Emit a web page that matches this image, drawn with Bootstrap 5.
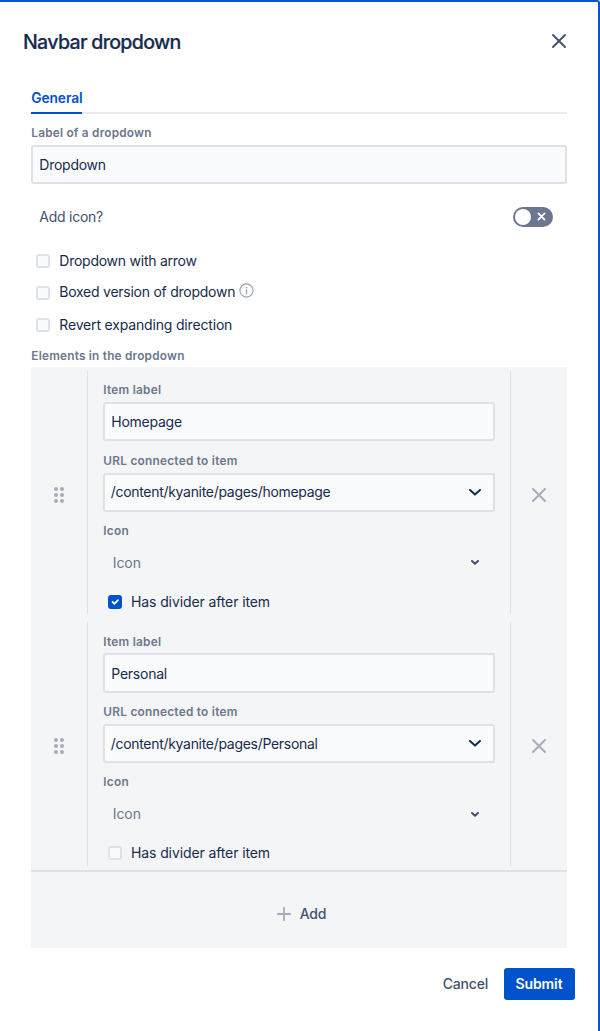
<!DOCTYPE html>
<html lang="en">
<head>
<meta charset="utf-8">
<meta name="viewport" content="width=device-width, initial-scale=1">
<title>Navbar dropdown</title>
<link href="https://cdn.jsdelivr.net/npm/bootstrap@5.3.0/dist/css/bootstrap.min.css" rel="stylesheet">
<style>
body{font-family:Inter,"Liberation Sans",sans-serif;font-size:14px;line-height:20px;color:#172b4d;background:#fff}
.dialog{height:1031px;border-top:2px solid #0059cf;border-right:2px solid #0059cf;border-top-right-radius:3px;overflow:hidden;padding:0 31.5px 0 31.3px}
.dialog-head{height:79px;margin:0 1px 1px -8.3px}
.dialog-title{font-size:19.6px;line-height:24px;font-weight:500;letter-spacing:-.7px;margin:0;-webkit-text-stroke:.2px}
.plain-btn{border:0;background:none;padding:0;display:flex;color:#42526e}
.dialog-head .plain-btn{margin-top:-1px}
.tabs{height:32px;border-bottom:2px solid #ebecf0}
.tabs .nav-link{padding:6px 0 0;height:32px;line-height:20px;font-weight:600;font-size:13.8px;letter-spacing:-.12px;color:#0052cc;border-bottom:2px solid #0052cc}
.field-label{display:block;font-size:11.8px;line-height:16px;font-weight:600;letter-spacing:.22px;color:#6b778c;margin:11.2px 0 3.9px}
.item-body .field-label{letter-spacing:.27px}
.field{height:39.4px;border:2px solid #dfe1e6;border-radius:3px;background:#fafbfc;padding:0 6px;font-size:14px;line-height:20px;letter-spacing:-.25px;color:#172b4d}
.field:focus{box-shadow:none}
.select-field{letter-spacing:-.3px;padding-left:5.4px}
.quiet{border-color:transparent;background:none;color:#6b778c;padding-left:7.5px;letter-spacing:-.1px}
.add-icon{letter-spacing:-.25px;color:#42526e}
.toggle{width:40px;height:20px;border-radius:10px;background:#6b778c;padding:2px 6.5px 2px 2px}
.knob{width:16px;height:16px;border-radius:50%;background:#fff}
.check-row{height:20px;padding-left:5px;gap:9px;letter-spacing:-.25px}
.item-body .check-row{letter-spacing:-.11px;margin-top:9.6px;gap:8.7px}
.check-row .form-check-input{width:14px;height:14px;margin:0;border:2px solid #dfe1e6;border-radius:3px;background-color:#fafbfc;flex:none}
.check-row .form-check-input:checked{background-color:#0052cc;border-color:#0052cc;background-size:12px}
.panel{background:#f4f5f7;margin-top:3px}
.item{padding:4px 0;height:251.4px}
.side{width:56px;padding-top:4.4px}
.item-body{border-left:1px solid #dfe1e6;border-right:1px solid #dfe1e6;padding:0 15px}
.add-row{height:78.3px;border-top:2px solid #dfe1e6;color:#42526e;font-weight:500;gap:9px;padding:8px 0 0 5px;letter-spacing:-.2px}
.foot{height:72px;margin-right:-8px}
.foot .cancel{font-weight:500;color:#42526e;padding:0;margin-right:15.5px;border:0;font-size:14px;line-height:20px;letter-spacing:-.2px}
.foot .submit{width:71px;height:32px;padding:0 0 1px;border:0;border-radius:3px;background:#0052cc;color:#fff;font-size:14px;font-weight:600;letter-spacing:-.1px}
</style>
</head>
<body>
<svg class="d-none">
  <symbol id="cross" viewBox="0 0 14 14"><path d="M1 1L13 13M13 1L1 13" fill="none" stroke="currentColor" stroke-width="1.9" stroke-linecap="round"/></symbol>
  <symbol id="chev" viewBox="0 0 12 7"><path d="M1 1L6 5.6L11 1" fill="none" stroke="currentColor" stroke-width="2" stroke-linecap="round" stroke-linejoin="round"/></symbol>
  <symbol id="chev-small" viewBox="0 0 8 5"><path d="M1 1L4 3.7L7 1" fill="none" stroke="currentColor" stroke-width="2" stroke-linecap="round" stroke-linejoin="round"/></symbol>
  <symbol id="grip" viewBox="0 0 10 16"><g fill="#a5adba"><circle cx="2" cy="2" r="2"/><circle cx="8" cy="2" r="2"/><circle cx="2" cy="8" r="2"/><circle cx="8" cy="8" r="2"/><circle cx="2" cy="14" r="2"/><circle cx="8" cy="14" r="2"/></g></symbol>
</svg>
<main class="dialog">
  <header class="dialog-head d-flex align-items-center justify-content-between">
    <h1 class="dialog-title">Navbar dropdown</h1>
    <button class="plain-btn" aria-label="Close"><svg width="14" height="14"><use href="#cross"/></svg></button>
  </header>
  <nav class="nav tabs"><a class="nav-link" href="#">General</a></nav>
  <label class="field-label" for="lbl">Label of a dropdown</label>
  <input class="form-control field" id="lbl" value="Dropdown">
  <div class="d-flex align-items-center justify-content-between" style="height:64px;padding:1px 14px 0 8px">
    <span class="add-icon">Add icon?</span>
    <div class="toggle d-flex align-items-center justify-content-between">
      <span class="knob"></span>
      <svg width="9" height="9" viewBox="0 0 9 9"><path d="M1.4 1.4L7.6 7.6M7.6 1.4L1.4 7.6" stroke="#fff" stroke-width="1.8" stroke-linecap="round"/></svg>
    </div>
  </div>
  <div class="d-flex flex-column" style="gap:12px;padding-top:2.3px">
    <label class="check-row d-flex align-items-center"><input type="checkbox" class="form-check-input"><span>Dropdown with arrow</span></label>
    <label class="check-row d-flex align-items-center"><input type="checkbox" class="form-check-input"><span class="pb-1" style="line-height:18px;padding-top:2px">Boxed version of dropdown</span>
      <svg width="15" height="15" viewBox="0 0 15 15" style="margin:-5px 0 0 -5.3px"><circle cx="7.5" cy="7.5" r="6.6" fill="none" stroke="#97a0af" stroke-width="1.1"/><circle cx="7.5" cy="4.6" r=".85" fill="#97a0af"/><path d="M7.5 6.9V10.8" stroke="#97a0af" stroke-width="1.3" stroke-linecap="round"/></svg></label>
    <label class="check-row d-flex align-items-center" style="letter-spacing:-.17px"><input type="checkbox" class="form-check-input"><span>Revert expanding direction</span></label>
  </div>
  <div class="field-label" style="margin:13.2px 0 2.8px">Elements in the dropdown</div>
  <section class="panel">
    <div class="item d-flex">
      <div class="side d-flex align-items-center justify-content-center"><svg width="10" height="16"><use href="#grip"/></svg></div>
      <div class="item-body flex-grow-1">
        <label class="field-label" for="i1">Item label</label>
        <input class="form-control field" id="i1" value="Homepage">
        <span class="field-label">URL connected to item</span>
        <div class="field select-field d-flex align-items-center justify-content-between"><span>/content/kyanite/pages/homepage</span><svg width="12" height="7" style="margin-right:5.5px"><use href="#chev"/></svg></div>
        <span class="field-label">Icon</span>
        <div class="field quiet d-flex align-items-center justify-content-between"><span>Icon</span><svg width="8" height="5" style="margin-right:7.5px;color:#42526e"><use href="#chev-small"/></svg></div>
        <label class="check-row d-flex align-items-center"><input type="checkbox" class="form-check-input" checked><span>Has divider after item</span></label>
      </div>
      <div class="side d-flex align-items-center justify-content-center"><button class="plain-btn" style="color:#a5adba" aria-label="Remove"><svg width="14" height="14"><use href="#cross"/></svg></button></div>
    </div>
    <div class="item d-flex">
      <div class="side d-flex align-items-center justify-content-center"><svg width="10" height="16"><use href="#grip"/></svg></div>
      <div class="item-body flex-grow-1">
        <label class="field-label" for="i2">Item label</label>
        <input class="form-control field" id="i2" value="Personal">
        <span class="field-label">URL connected to item</span>
        <div class="field select-field d-flex align-items-center justify-content-between"><span>/content/kyanite/pages/Personal</span><svg width="12" height="7" style="margin-right:5.5px"><use href="#chev"/></svg></div>
        <span class="field-label">Icon</span>
        <div class="field quiet d-flex align-items-center justify-content-between"><span>Icon</span><svg width="8" height="5" style="margin-right:7.5px;color:#42526e"><use href="#chev-small"/></svg></div>
        <label class="check-row d-flex align-items-center"><input type="checkbox" class="form-check-input"><span>Has divider after item</span></label>
      </div>
      <div class="side d-flex align-items-center justify-content-center"><button class="plain-btn" style="color:#a5adba" aria-label="Remove"><svg width="14" height="14"><use href="#cross"/></svg></button></div>
    </div>
    <div class="add-row d-flex align-items-center justify-content-center">
      <svg width="14" height="14" viewBox="0 0 14 14"><path d="M7 .8V13.2M.8 7H13.2" stroke="#a5adba" stroke-width="1.8" stroke-linecap="round"/></svg><span>Add</span>
    </div>
  </section>
  <footer class="foot d-flex align-items-center justify-content-end">
    <button class="btn cancel">Cancel</button><button class="btn submit">Submit</button>
  </footer>
</main>
<script src="https://cdn.jsdelivr.net/npm/bootstrap@5.3.0/dist/js/bootstrap.bundle.min.js"></script>
</body>
</html>
